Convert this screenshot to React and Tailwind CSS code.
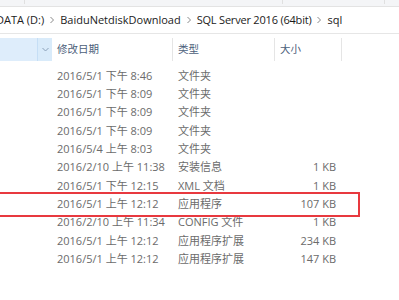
import React from "react";

const rows = [
  ["2016/5/1 下午 8:46", "文件夹", ""],
  ["2016/5/1 下午 8:09", "文件夹", ""],
  ["2016/5/1 下午 8:09", "文件夹", ""],
  ["2016/5/1 下午 8:09", "文件夹", ""],
  ["2016/5/4 上午 8:03", "文件夹", ""],
  ["2016/2/10 上午 11:38", "安装信息", "1 KB"],
  ["2016/5/1 下午 12:15", "XML 文档", "1 KB"],
  ["2016/5/1 上午 12:12", "应用程序", "107 KB"],
  ["2016/2/10 上午 11:34", "CONFIG 文件", "1 KB"],
  ["2016/5/1 上午 12:12", "应用程序扩展", "234 KB"],
  ["2016/5/1 上午 12:12", "应用程序扩展", "147 KB"],
];

function Chev() {
  return (
    <svg width="6" height="8" viewBox="0 0 6 8" className="mx-[5px]">
      <path d="M1.5 1 L4.5 4 L1.5 7" fill="none" stroke="#8a8a8a" strokeWidth="1" />
    </svg>
  );
}

export default function App() {
  return (
    <div
      className="relative w-[399px] h-[300px] overflow-hidden bg-white"
      style={{ fontFamily: '"Open Sans", "Noto Sans CJK SC", sans-serif' }}
    >
      {/* top toolbar strip */}
      <div className="flex h-[7px] bg-[#f4f5f7] border-b border-[#e3e3e3]">
        <div className="w-[25px] border-r border-[#e0e0e0] h-[4px]" />
        <div className="w-[258px] border-r border-[#e0e0e0] h-[4px]" />
        <div className="w-[102px] border-r border-[#e0e0e0] h-[4px]" />
      </div>
      {/* address bar */}
      <div className="flex items-center h-[27px] border-b border-[#e6e6e6] text-[11px] text-[#1b1b1b] whitespace-nowrap -ml-[4px]">
        <span>DATA (D:)</span>
        <Chev />
        <span>BaiduNetdiskDownload</span>
        <Chev />
        <span className="tracking-[-0.2px]">SQL Server 2016 (64bit)</span>
        <Chev />
        <span>sql</span>
      </div>
      {/* header */}
      <div className="flex mt-[4px] h-[23px] text-[10.5px] text-[#4c607a] whitespace-nowrap">
        <div className="w-[38px] bg-[#deedfb] border-r border-[#c5def5]" />
        <div className="w-[14px] bg-[#d9ebfa] flex items-center justify-center">
          <svg width="7" height="5" viewBox="0 0 7 5">
            <path d="M0.5 1 L3.5 4 L6.5 1" fill="none" stroke="#8aa0b8" strokeWidth="1" />
          </svg>
        </div>
        <div className="w-[121px] border-r border-[#e5e5e5] pl-[5px] flex items-center">修改日期</div>
        <div className="w-[102px] border-r border-[#e5e5e5] pl-[5px] flex items-center">类型</div>
        <div className="w-[67px] border-r border-[#e5e5e5] pl-[5px] flex items-center">大小</div>
      </div>
      {/* rows */}
      <div className="mt-[6px] flex flex-col text-[11px] text-[#6b6b6b] whitespace-nowrap">
        {rows.map((r, i) => (
          <div key={i} className="flex h-[18.3px] items-center">
            <div className="w-[52px]" />
            <div className="w-[121px] pl-[5px]">{r[0]}</div>
            <div className="w-[102px] pl-[5px]">{r[1]}</div>
            <div className="w-[67px] pr-[6px] text-right">{r[2]}</div>
          </div>
        ))}
      </div>
      {/* red highlight annotation */}
      <div className="absolute left-[-4px] top-[192px] w-[364px] h-[25px] border-2 border-[#e8393f]" />
    </div>
  );
}
